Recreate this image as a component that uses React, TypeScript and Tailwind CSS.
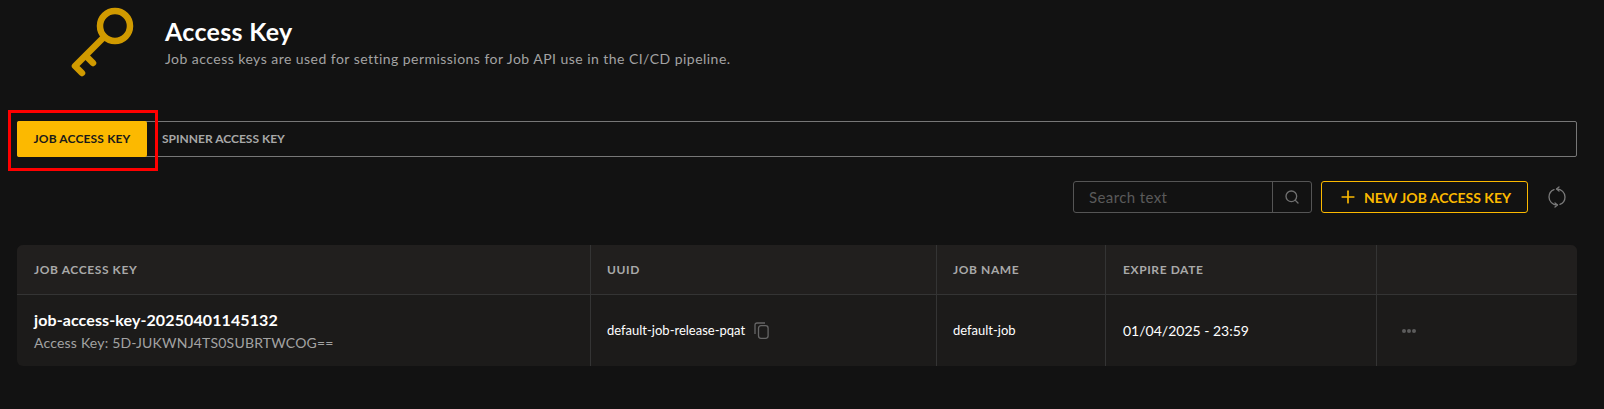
import { Plus, Search } from 'lucide-react';

function KeyIcon() {
  return (
    <svg width="64" height="72" viewBox="0 0 64 72" fill="none" stroke="#d09a00" strokeLinecap="round" strokeLinejoin="round" strokeWidth="6.5">
      <circle cx="44" cy="19" r="15" />
      <path d="M33 30 L4 59 L11 66" />
      <path d="M15 49 L22 56" />
    </svg>
  );
}

function CopyIcon() {
  return (
    <svg width="15" height="17" viewBox="0 0 15 17" fill="none" stroke="#666666" strokeWidth="1.3" className="ml-[9px]">
      <rect x="4.5" y="3.7" width="9.6" height="12.6" rx="2.5" />
      <path d="M1 12 V3 C1 1.8 1.8 1 3 1 H11" />
    </svg>
  );
}

function ReloadIcon() {
  return (
    <svg width="22" height="22" viewBox="0 0 22 22" fill="none" stroke="#7a7a7a" strokeWidth="1.3" strokeLinecap="round" strokeLinejoin="round">
      <path d="M11 3 A8 8 0 0 1 19 11 A8 8 0 0 1 14 18.4" />
      <path d="M11 19 A8 8 0 0 1 3 11 A8 8 0 0 1 8 3.6" />
      <path d="M13 1 L10.5 3 L13 5" />
      <path d="M9 17 L11.5 19 L9 21" />
    </svg>
  );
}

const cols = 'grid grid-cols-[573px_346px_169px_271px_201px]';

export default function App() {
  return (
    <div className="relative h-[409px] w-[1604px] overflow-hidden bg-[#121212] pl-[17px] pr-[27px] font-['Lato','Noto_Sans',sans-serif] text-white">
      <div className="flex h-[121px] items-start">
        <div className="ml-[54px] mt-[7px] w-[94px]">
          <KeyIcon />
        </div>
        <div className="mt-[15px]">
          <h1 className="text-[25px] font-bold leading-[32px] tracking-[0.3px]">Access Key</h1>
          <p className="mt-[2px] text-[14px] leading-[20px] tracking-[0.46px] text-[#a3a3a3]">
            Job access keys are used for setting permissions for Job API use in the CI/CD pipeline.
          </p>
        </div>
      </div>

      <div className="flex h-[36px] items-stretch rounded-[2px] border border-[#777777]">
        <div className="-my-px -ml-px flex w-[130px] items-center justify-center rounded-[2px] bg-[#fcb900] text-[12px] font-bold tracking-[0.15px] text-[#1a1a1a]">
          JOB ACCESS KEY
        </div>
        <div className="flex items-center pl-[15px] text-[12px] font-bold text-[#a8a8a8]">SPINNER ACCESS KEY</div>
      </div>

      <div className="mt-[24px] flex h-[32px] items-center justify-end">
        <div className="flex h-[32px] w-[239px] items-center rounded-[3px] border border-[#555555]">
          <span className="flex-1 pl-[15px] text-[15px] tracking-[0.4px] text-[#5a5a5a]">Search text</span>
          <span className="flex h-full w-[39px] items-center justify-center border-l border-[#555555]">
            <Search size={16} className="text-[#707070]" />
          </span>
        </div>
        <button className="ml-[9px] flex h-[32px] w-[207px] items-center justify-center gap-[6px] rounded-[3px] border border-[#fcb900] text-[14px] font-bold text-[#fcb900]">
          <Plus size={20} />
          NEW JOB ACCESS KEY
        </button>
        <span className="ml-[17px] mr-[9px] flex w-[23px] justify-center">
          <ReloadIcon />
        </span>
      </div>

      <div className="mt-[32px] overflow-hidden rounded-[6px] bg-[#1c1b1a]">
        <div className={`${cols} h-[50px] border-b border-[#343434] bg-[#211f1e] text-[12px] font-bold tracking-[0.6px] text-[#a9a9a9]`}>
          <div className="flex items-center pl-[17px]">JOB ACCESS KEY</div>
          <div className="flex items-center border-l border-[#343434] pl-[16px]">UUID</div>
          <div className="flex items-center border-l border-[#343434] pl-[16px]">JOB NAME</div>
          <div className="flex items-center border-l border-[#343434] pl-[17px]">EXPIRE DATE</div>
          <div className="border-l border-[#343434]" />
        </div>
        <div className={`${cols} h-[71px]`}>
          <div className="flex flex-col justify-center pl-[17px]">
            <div className="text-[16px] font-bold leading-[22px] tracking-[0.1px]">job-access-key-20250401145132</div>
            <div className="mt-[2px] text-[14px] leading-[20px] tracking-[0.2px] text-[#a3a3a3]">Access Key: 5D-JUKWNJ4TS0SUBRTWCOG==</div>
          </div>
          <div className="flex items-center border-l border-[#343434] pl-[16px] text-[13px]">
            default-job-release-pqat
            <CopyIcon />
          </div>
          <div className="flex items-center border-l border-[#343434] pl-[16px] text-[13px]">default-job</div>
          <div className="flex items-center border-l border-[#343434] pl-[17px] text-[14px]">01/04/2025 - 23:59</div>
          <div className="flex items-center border-l border-[#343434] pl-[25px]">
            <span className="flex gap-[1px]">
              <i className="size-[4px] rounded-full bg-[#5c5c5c]" />
              <i className="size-[4px] rounded-full bg-[#5c5c5c]" />
              <i className="size-[4px] rounded-full bg-[#5c5c5c]" />
            </span>
          </div>
        </div>
      </div>

      <div className="absolute left-[8px] top-[110px] h-[61px] w-[150px] border-[3px] border-[#ff0000]" />
    </div>
  );
}
